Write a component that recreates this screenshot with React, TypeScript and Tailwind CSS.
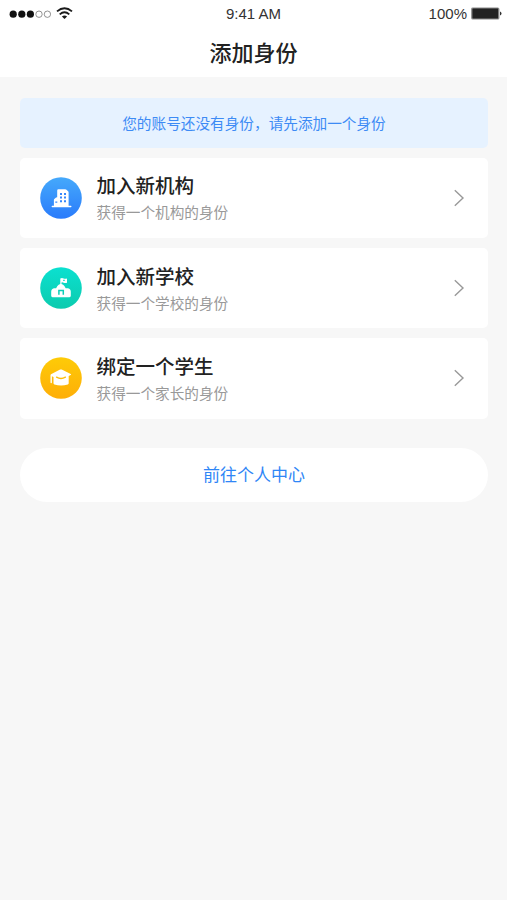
import React from 'react';

interface Identity {
    id: string;
    title: string;
    description: string;
    icon: React.ReactNode;
}

const OrgIcon = () => (
    <svg className="w-[42px] h-[42px] shrink-0" viewBox="0 0 42 42" fill="none">
        <defs>
            <linearGradient id="org" x1="0" y1="0" x2="0" y2="1">
                <stop offset="0" stopColor="#45a9fb" />
                <stop offset="1" stopColor="#2a7bfb" />
            </linearGradient>
        </defs>
        <circle cx="21" cy="21" r="20.8" fill="url(#org)" />
        <path d="M17.2 13.4q0-1.2 1.2-1.2h6.6q.6 0 1.1.4l2 1.7q.5.4.5 1.1v13.4h2.2q.7 0 .7.7t-.7.7H12.3q-.7 0-.7-.7t.7-.7h1.6v-5.9q0-.5.4-.9l1.8-1.4q.5-.4 1.1-.4z" fill="#fff" />
        <path d="M20 16h2v2h-2zM24 16h2v2h-2zM20 19.6h2v2h-2zM24 19.6h2v2h-2zM20 23.2h2v2h-2zM24 23.2h2v2h-2zM15.3 24.4h2v1.4h-2z" fill="#3587fb" />
    </svg>
);

const SchoolIcon = () => (
    <svg className="w-[42px] h-[42px] shrink-0" viewBox="0 0 42 42" fill="none">
        <defs>
            <linearGradient id="school" x1="0" y1="0" x2="0" y2="1">
                <stop offset="0" stopColor="#0be0d0" />
                <stop offset="1" stopColor="#0ccbae" />
            </linearGradient>
        </defs>
        <circle cx="21" cy="21" r="20.8" fill="url(#school)" />
        <path d="M20.3 17v-5.6q1.7-.9 3.3 0t3.4 0v4.3q-1.6.8-3.3 0t-2.2-.1V17q1.8.4 2.9 2l1.3 2.2H28q2.8.5 2.8 3.6v4q0 1.4-1.3 1.4H12.5q-1.3 0-1.3-1.4v-4q0-3.1 2.8-3.6h2.1l1.3-2.2q1.1-1.6 2.9-2z" fill="#fff" />
        <path d="M23.2 12.7h1.5v1.4h-1.5z" fill="#0cd9c5" />
        <path d="M18.9 27.8v-4.4h4.4v4.4" stroke="#0ccfb8" strokeWidth="1.5" />
    </svg>
);

const StudentIcon = () => (
    <svg className="w-[42px] h-[42px] shrink-0" viewBox="0 0 42 42" fill="none">
        <defs>
            <linearGradient id="student" x1="0" y1="0" x2="0" y2="1">
                <stop offset="0" stopColor="#fecb07" />
                <stop offset="1" stopColor="#feae08" />
            </linearGradient>
        </defs>
        <circle cx="21" cy="21" r="20.8" fill="url(#student)" />
        <path d="M20.1 12.6q.8-.4 1.6 0l9 4.4q.9.5 0 1l-2 1v7.3q0 .9-.9 1.2-6.7 2-13.4 0-.9-.3-.9-1.2v-6.4l-1.6-.7v6.4q0 .7-.7.7t-.7-.7v-7.4q0-.6.5-.9z" fill="#fff" />
        <path d="M16.6 20.2q4.4 2.6 8.8 0" stroke="#febd08" strokeWidth="1.4" strokeLinecap="round" />
    </svg>
);

const identities: Identity[] = [
    { id: 'org', title: '加入新机构', description: '获得一个机构的身份', icon: <OrgIcon /> },
    { id: 'school', title: '加入新学校', description: '获得一个学校的身份', icon: <SchoolIcon /> },
    { id: 'student', title: '绑定一个学生', description: '获得一个家长的身份', icon: <StudentIcon /> },
];

const StatusBar = () => (
    <div className="grid grid-cols-3 items-center h-7 pl-[9px] pr-[5px] text-[15px] text-[#333]">
        <div className="flex items-center gap-[5px]">
            <svg width="42" height="9" viewBox="0 0 42 9">
                <g fill="#111">
                    <circle cx="4.2" cy="4.2" r="3.6" />
                    <circle cx="12.8" cy="4.2" r="3.6" />
                    <circle cx="21.4" cy="4.2" r="3.6" />
                </g>
                <g fill="none" stroke="#777" strokeWidth="0.8">
                    <circle cx="30" cy="4.2" r="3.2" />
                    <circle cx="38.4" cy="4.2" r="3.2" />
                </g>
            </svg>
            <svg width="17" height="12" viewBox="0 0 17 12" fill="none" stroke="#1a1a1a" strokeWidth="1.8" className="-mt-[2px]">
                <path d="M1 4.4q7.5-6.4 15 0" />
                <path d="M3.7 7.4q4.8-4.2 9.6 0" />
                <path d="M8.5 12 5.9 9.5q2.6-2 5.2 0z" fill="#1a1a1a" stroke="none" />
            </svg>
        </div>
        <div className="pt-px pr-[4px] text-center">9:41 AM</div>
        <div className="flex items-center justify-end gap-[4px]">
            <span className="pt-px">100%</span>
            <svg width="31" height="13" viewBox="0 0 31 13" className="-mt-px">
                <rect x="0.8" y="1" width="27" height="11" rx="1" fill="#222" stroke="#8a8a8a" strokeWidth="1.2" />
                <path d="M29 4.5q1.5.4 1.5 2t-1.5 2z" fill="#333" />
            </svg>
        </div>
    </div>
);

const IdentityCard = ({ title, description, icon }: Omit<Identity, 'id'>) => (
    <button type="button" className="flex items-center w-full h-[80.5px] pl-[20px] pr-[23px] bg-white rounded-[5px] text-left">
        {icon}
        <div className="flex-1 ml-[14.5px] pt-[2px]">
            <div className="text-[19.5px] leading-[28px] font-medium text-[#222]">{title}</div>
            <div className="mt-px text-[14.65px] leading-[24px] text-[#999]">{description}</div>
        </div>
        <svg width="12" height="18" viewBox="0 0 12 18" fill="none" stroke="#999" strokeWidth="1.4">
            <path d="M1.8 1.2 10 9l-8.2 7.8" />
        </svg>
    </button>
);

export default function App() {
    return (
        <div className="min-h-screen bg-[#f7f7f7] font-['Liberation_Sans','Noto_Sans_CJK_SC',sans-serif]">
            <header className="h-[77px] bg-white">
                <StatusBar />
                <h1 className="text-center text-[22px] leading-[51px] font-medium text-[#222]">添加身份</h1>
            </header>

            <main className="pt-[21px] pl-[20px] pr-[19px]">
                <div className="h-[50px] leading-[52px] rounded-[5px] bg-[#e6f2ff] text-center text-[14.65px] text-[#3d8bf5]">
                    您的账号还没有身份，请先添加一个身份
                </div>

                <div className="mt-[9.5px] flex flex-col gap-[9.75px]">
                    {identities.map((item) => (
                        <IdentityCard key={item.id} title={item.title} description={item.description} icon={item.icon} />
                    ))}
                </div>

                <button type="button" className="mt-[29.5px] pt-[2px] w-full h-[54px] rounded-full bg-white text-[17px] text-[#2f86f6]">
                    前往个人中心
                </button>
            </main>
        </div>
    );
}
